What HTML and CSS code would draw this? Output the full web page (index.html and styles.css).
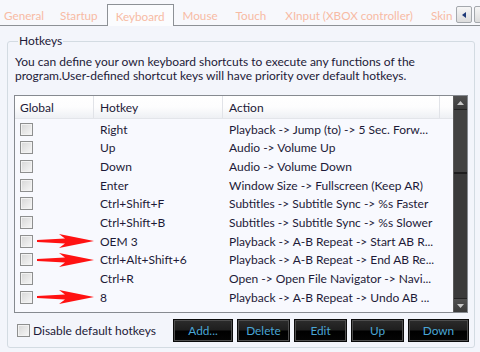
FILE: index.html
```html
<!DOCTYPE html>
<html lang="en">
<head>
    <meta charset="UTF-8">
    <title>Keyboard</title>
    <link rel="stylesheet" href="styles.css">
</head>
<body>

    <div class="tabs">
        <span class="tab t-general">General</span>
        <span class="tab t-startup">Startup</span>
        <span class="tab active">Keyboard</span>
        <span class="tab t-mouse">Mouse</span>
        <span class="tab t-touch">Touch</span>
        <span class="tab t-xinput">XInput (XBOX controller)</span>
        <span class="tab t-skin">Skin</span>
        <div class="tab-scroll">
            <span class="scroll-btn"><svg width="4" height="6" viewBox="0 0 4 6"><path d="M4 0 L0 3 L4 6 Z" fill="#1f3a78"/></svg></span>
            <span class="scroll-btn"><svg width="4" height="6" viewBox="0 0 4 6"><path d="M0 0 L4 3 L0 6 Z" fill="#1f3a78"/></svg></span>
        </div>
    </div>

    <fieldset class="group">
        <legend>Hotkeys</legend>
        <p class="desc">You can define your own keyboard shortcuts to execute any functions of the program.User-defined shortcut keys will have priority over default hotkeys.</p>

        <div class="list">
            <div class="list-body">
                <div class="head">
                    <span class="col-global">Global</span>
                    <span class="col-key">Hotkey</span>
                    <span class="col-action">Action</span>
                    <span class="col-rest"></span>
                </div>
                <div class="row"><span class="col-global"><i class="check"></i></span><span class="col-key">Right</span><span class="col-action">Playback -&gt; Jump (to) -&gt; 5 Sec. Forw...</span></div>
                <div class="row"><span class="col-global"><i class="check"></i></span><span class="col-key">Up</span><span class="col-action">Audio -&gt; Volume Up</span></div>
                <div class="row"><span class="col-global"><i class="check"></i></span><span class="col-key">Down</span><span class="col-action">Audio -&gt; Volume Down</span></div>
                <div class="row"><span class="col-global"><i class="check"></i></span><span class="col-key">Enter</span><span class="col-action">Window Size -&gt; Fullscreen (Keep AR)</span></div>
                <div class="row"><span class="col-global"><i class="check"></i></span><span class="col-key">Ctrl+Shift+F</span><span class="col-action">Subtitles -&gt; Subtitle Sync -&gt; %s Faster</span></div>
                <div class="row"><span class="col-global"><i class="check"></i></span><span class="col-key">Ctrl+Shift+B</span><span class="col-action">Subtitles -&gt; Subtitle Sync -&gt; %s Slower</span></div>
                <div class="row"><span class="col-global"><i class="check"></i><svg class="arrow" width="58" height="16" viewBox="0 0 58 16"><path d="M0 7 L28 5.4 L22 1 L57 8 L22 15 L28 10.6 L0 9 Z" fill="#ff1212"/></svg></span><span class="col-key">OEM 3</span><span class="col-action">Playback -&gt; A-B Repeat -&gt; Start AB R...</span></div>
                <div class="row"><span class="col-global"><i class="check"></i><svg class="arrow" width="58" height="16" viewBox="0 0 58 16"><path d="M0 7 L28 5.4 L22 1 L57 8 L22 15 L28 10.6 L0 9 Z" fill="#ff1212"/></svg></span><span class="col-key">Ctrl+Alt+Shift+6</span><span class="col-action">Playback -&gt; A-B Repeat -&gt; End AB Re...</span></div>
                <div class="row"><span class="col-global"><i class="check"></i></span><span class="col-key">Ctrl+R</span><span class="col-action">Open -&gt; Open File Navigator -&gt; Navi...</span></div>
                <div class="row"><span class="col-global"><i class="check"></i><svg class="arrow" width="58" height="16" viewBox="0 0 58 16"><path d="M0 7 L28 5.4 L22 1 L57 8 L22 15 L28 10.6 L0 9 Z" fill="#ff1212"/></svg></span><span class="col-key">8</span><span class="col-action">Playback -&gt; A-B Repeat -&gt; Undo AB ...</span></div>
            </div>
            <div class="vscroll">
                <span class="vbtn"><svg width="7" height="4" viewBox="0 0 7 4"><path d="M0 4 L3.5 0 L7 4 Z" fill="#c8c8c8"/></svg></span>
                <span class="thumb"></span>
                <span class="track"></span>
                <span class="vbtn"><svg width="7" height="4" viewBox="0 0 7 4"><path d="M0 0 L3.5 4 L7 0 Z" fill="#c8c8c8"/></svg></span>
            </div>
        </div>

        <div class="actions">
            <label class="disable"><i class="check"></i>Disable default hotkeys</label>
            <div class="buttons">
                <button class="btn w-add">Add...</button>
                <button class="btn w-mid">Delete</button>
                <button class="btn w-mid">Edit</button>
                <button class="btn w-mid">Up</button>
                <button class="btn w-down">Down</button>
            </div>
        </div>
    </fieldset>

</body>
</html>
```

FILE: styles.css
```css
body {
    margin: 0;
    width: 480px;
    height: 352px;
    overflow: hidden;
    background-color: #f3f5fb;
    font-family: 'Lato', 'Liberation Sans', sans-serif;
    font-size: 12px;
    color: #1d1a38;
}

/* tab strip */
.tabs {
    position: relative;
    display: flex;
    align-items: flex-end;
    height: 25px;
    border-bottom: 1px solid #8d9196;
    background-color: #f7f8fc;
}
.tab {
    color: #f7bba4;
    font-size: 11.7px;
    line-height: 20px;
    white-space: nowrap;
}
.t-general { margin-left: 4px; }
.t-startup { margin-left: 16px; }
.tab.active {
    margin-left: 9px;
    padding: 1px 8px 0 8px;
    height: 20px;
    margin-bottom: -1px;
    background-color: #fbfcfe;
    border: 1px solid #8d9196;
    border-bottom: none;
}
.t-mouse { margin-left: 9px; }
.t-touch { margin-left: 18px; }
.t-xinput { margin-left: 19px; }
.t-skin { margin-left: 18px; }
.tab-scroll {
    position: absolute;
    top: 6px;
    left: 456px;
    display: flex;
    gap: 2px;
    background-color: #f7f8fc;
}
.scroll-btn {
    display: flex;
    align-items: center;
    justify-content: center;
    width: 14px;
    height: 15px;
    border: 1px solid #a4a8ad;
    border-radius: 2px;
    background: linear-gradient(#f6f6f6, #dcdcdc);
}

/* group box */
.group {
    margin: 8px 5px 0 7px;
    padding: 0 6px 0 5px;
    height: 314px;
    box-sizing: border-box;
    border: 1px solid #d3dbe2;
    border-radius: 3px;
}
.group legend {
    padding: 0 1px;
    margin-left: 5px;
    line-height: 14px;
}
.desc {
    margin: 7px 0 0 2px;
    line-height: 14px;
    height: 32px;
}

/* list view */
.list {
    display: flex;
    height: 216px;
    margin: 8px 0 0 1px;
    border: 1px solid #868a90;
    background-color: #f8f9fe;
    overflow: hidden;
}
.list-body {
    flex: 1;
}
.head, .row {
    display: flex;
    align-items: center;
    white-space: nowrap;
}
.head {
    height: 23px;
    margin-bottom: 1px;
    background: linear-gradient(#ffffff 0%, #fdfdfe 50%, #eef0f4 100%);
    border-bottom: 1px solid #e3e5ea;
    box-sizing: border-box;
}
.head span {
    height: 100%;
    display: flex;
    align-items: center;
    border-right: 1px solid #e1e3e8;
    box-sizing: border-box;
}
.head .col-rest {
    flex: 1;
    border-right: none;
}
.row {
    height: 18.67px;
}
.col-global {
    width: 79px;
    padding-left: 5px;
    box-sizing: border-box;
    display: flex;
    align-items: center;
}
.col-key {
    width: 129px;
    padding-left: 6px;
    box-sizing: border-box;
}
.col-action {
    width: 217px;
    padding-left: 6px;
    box-sizing: border-box;
}
.arrow {
    margin-left: 4px;
    flex: none;
}

.check {
    display: inline-block;
    width: 11px;
    height: 11px;
    border: 1px solid #8e8f8f;
    background: linear-gradient(135deg, #d6d6d6, #f7f7f7);
    box-shadow: inset 0 0 0 1px #f2f2f2;
    flex: none;
}

/* vertical scrollbar */
.vscroll {
    width: 13px;
    display: flex;
    flex-direction: column;
    background-color: #363636;
    border-left: 1px solid #5a5a5a;
}
.vbtn {
    height: 13px;
    display: flex;
    align-items: center;
    justify-content: center;
    background: linear-gradient(#505050, #3a3a3a);
    border-bottom: 1px solid #222;
}
.vbtn:last-child {
    border-top: 1px solid #222;
    border-bottom: none;
}
.thumb {
    height: 62px;
    background-color: #424242;
    border-bottom: 2px solid #1e1e1e;
}
.track {
    flex: 1;
    background-color: #3a3a3a;
}

/* bottom row */
.actions {
    display: flex;
    align-items: center;
    justify-content: space-between;
    margin-top: 6px;
}
.disable {
    display: flex;
    align-items: center;
    gap: 3px;
    margin-left: 4px;
}
.buttons {
    display: flex;
    gap: 4px;
    margin-right: -1px;
}
.btn {
    height: 23px;
    padding: 0;
    font-family: inherit;
    font-size: 11.8px;
    color: #4aa6d6;
    border: 1px solid #0a0a0a;
    box-shadow: inset 0 0 0 1px #4e4e4e;
    background: linear-gradient(#2c2c2c 0%, #1e1e1e 48%, #000000 52%, #050505 100%);
}
.w-add { width: 60px; }
.w-mid { width: 53px; }
.w-down { width: 61px; }
```
